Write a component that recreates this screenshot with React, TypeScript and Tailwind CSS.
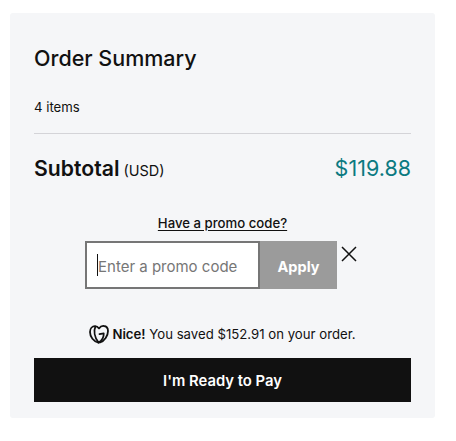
const font = "font-['Inter','Noto_Sans',sans-serif]";

function GoDaddyHeart() {
  return (
    <svg width="20" height="19" viewBox="0 0 20 19" fill="none" stroke="#111111" strokeWidth="1.8" strokeLinecap="round" strokeLinejoin="round" className="shrink-0">
      <path d="M9.5 17.6C4.6 16.6 1 11.8 1 7 1 3.6 3.2 1.3 6 1.2c1.7 0 3 .8 4 2.2 1.2-1.7 2.9-2.6 4.8-2.4 2.5.2 4.2 2.2 4.2 4.9 0 4.9-3.5 10-8 11.6" />
      <path d="M6.4 1.6C4.6 5.6 5.4 12 9.5 17.6c3.4-2 5.4-5.8 5.2-9.2l-4.2.8" />
    </svg>
  );
}

export default function App() {
  return (
    <div className={`w-[456px] h-[441px] bg-white pt-[13px] pl-[10px] ${font}`}>
      <div className="w-[425px] h-[405px] bg-[#f5f6f8] rounded-[3px] px-6 pt-[31px] text-[#111111]">
        <h2 className="text-[21.5px] leading-[28px] font-medium">Order Summary</h2>
        <p className="mt-[26px] text-[13.2px] leading-[18px]">4 items</p>
        <div className="mt-[17px] border-t border-[#d4d4d8]" />
        <div className="mt-[20px] flex items-center justify-between">
          <div className="flex items-baseline gap-[4px]">
            <span className="text-[21.2px] leading-[28px] font-semibold">Subtotal</span>
            <span className="text-[14.5px]">(USD)</span>
          </div>
          <span className="text-[21.5px] leading-[28px] text-[#0b7a81]">$119.88</span>
        </div>

        <div className="mt-[28px] text-center">
          <a href="#" className="text-[13.2px] leading-[18px] font-medium underline underline-offset-2">Have a promo code?</a>
        </div>

        <div className="mt-[7px] ml-[51px] flex items-start">
          <div className="w-[175px] h-[48px] border-2 border-[#767676] bg-white flex items-center pl-[10px]">
            <span className="w-px h-[22px] bg-[#111111]" />
            <span className="pt-[4px] text-[15px] text-[#767676]">Enter a promo code</span>
          </div>
          <button className="w-[77px] h-[48px] pt-[3px] bg-[#9b9b9b] text-white text-[14.5px] font-bold">Apply</button>
          <svg width="18" height="18" viewBox="0 0 18 18" stroke="#111111" strokeWidth="1.5" className="ml-[3px] mt-[4px]">
            <path d="M2 2l14 14M16 2L2 16" />
          </svg>
        </div>

        <div className="mt-[35px] flex items-center justify-center gap-[3px] text-[13.2px] leading-[20px]">
          <GoDaddyHeart />
          <span><span className="font-semibold">Nice!</span> You saved $152.91 on your order.</span>
        </div>

        <button className="mt-[14px] w-full h-[44px] pt-[3px] bg-[#111111] text-white text-[14.8px] font-semibold">I'm Ready to Pay</button>
      </div>
    </div>
  );
}
